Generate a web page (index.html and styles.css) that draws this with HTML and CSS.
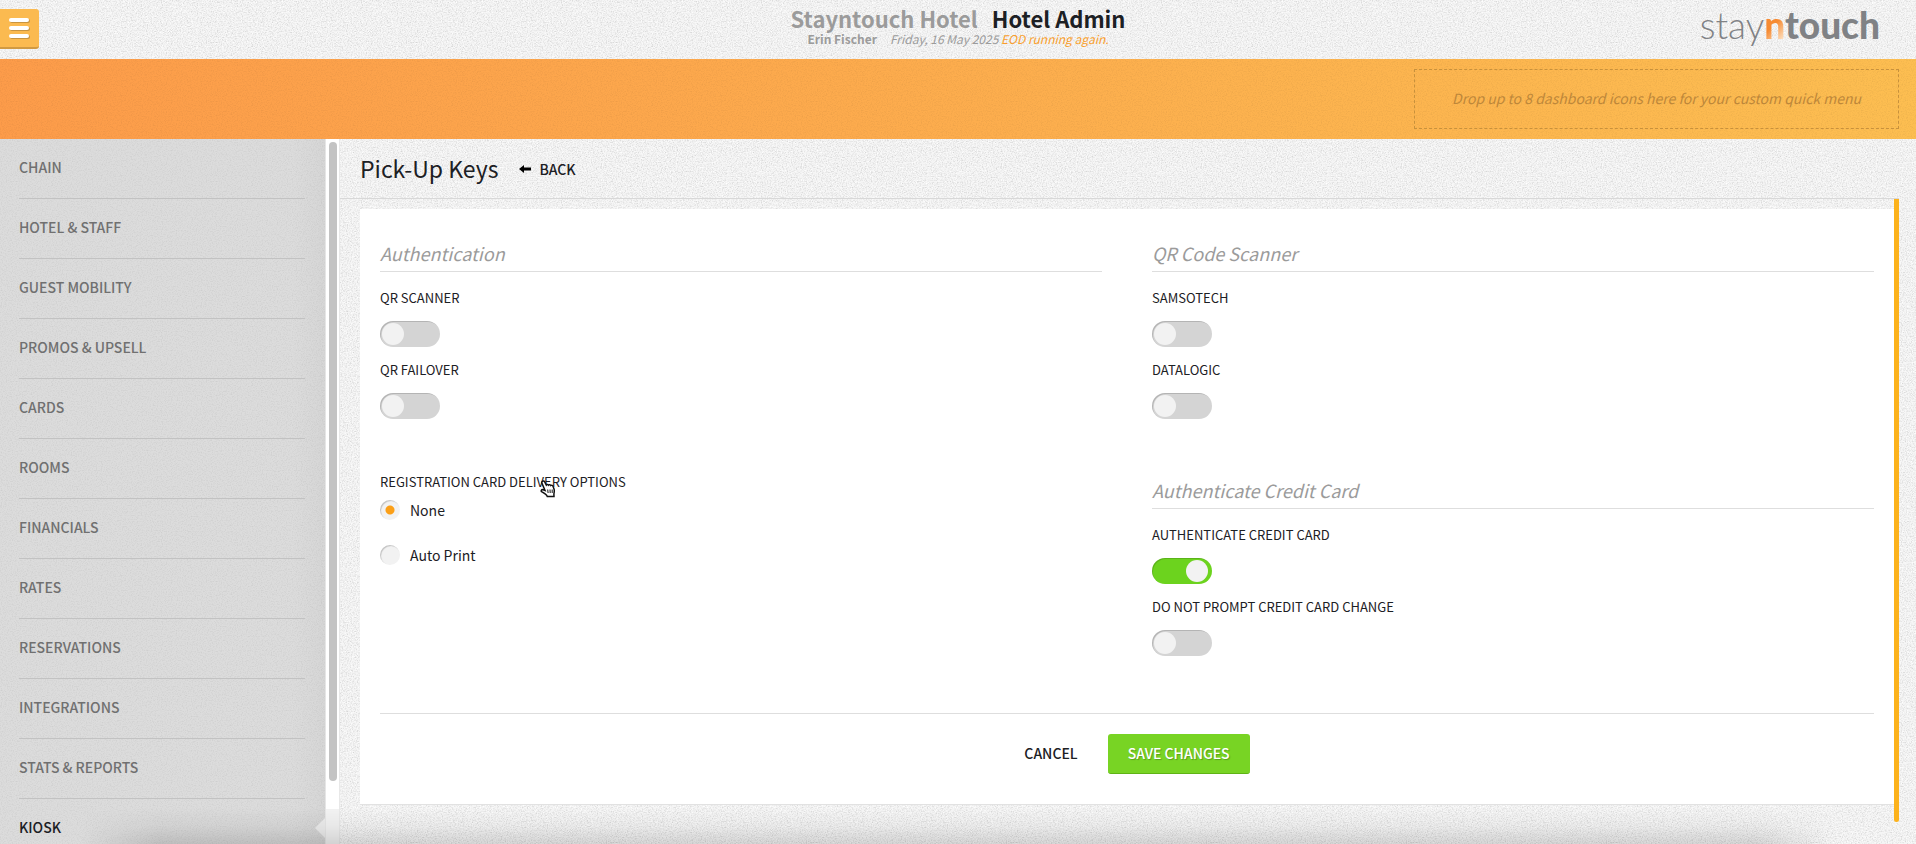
FILE: index.html
```html
<!DOCTYPE html>
<html lang="en">
<head>
<meta charset="utf-8">
<title>Hotel Admin - Pick-Up Keys</title>
<link rel="stylesheet" href="styles.css">
</head>
<body>
<header class="topbar">
  <button class="menu-btn" type="button" aria-label="Open menu"><span></span><span></span><span></span></button>
  <div class="titles">
    <h1 class="hotel"><span class="hotel-name">Stayntouch Hotel</span><span>Hotel Admin</span></h1>
    <p class="meta"><strong>Erin Fischer</strong><em>Friday, 16 May 2025 <span class="eod">EOD running again.</span></em></p>
  </div>
  <a class="logo" href="#"><span class="logo-light">stay</span><span class="logo-n">n</span>touch</a>
</header>
<section class="quick">
  <div class="drop">Drop up to 8 dashboard icons here for your custom quick menu</div>
</section>
<div class="body">
  <nav class="side">
    <a href="#">Chain</a>
    <a href="#">Hotel &amp; Staff</a>
    <a href="#">Guest Mobility</a>
    <a href="#">Promos &amp; Upsell</a>
    <a href="#">Cards</a>
    <a href="#">Rooms</a>
    <a href="#">Financials</a>
    <a href="#">Rates</a>
    <a href="#">Reservations</a>
    <a href="#">Integrations</a>
    <a href="#">Stats &amp; Reports</a>
    <a href="#" class="active" aria-current="page">Kiosk</a>
  </nav>
  <div class="track" aria-hidden="true"><div class="thumb"></div></div>
  <main class="main">
    <div class="page-head">
      <h2>Pick-Up Keys</h2>
      <a class="back" href="#"><svg width="12" height="8" viewBox="0 0 12 8" aria-hidden="true"><path d="M0 4 5 0V2.500H12V5.500H5V8Z"/></svg>Back</a>
    </div>
    <div class="scroll">
      <form class="card">
        <div class="cols">
          <div class="col">
            <fieldset>
              <legend>Authentication</legend>
              <div class="field"><label for="qr">QR Scanner</label><input class="switch" type="checkbox" id="qr"></div>
              <div class="field"><label for="fail">QR Failover</label><input class="switch" type="checkbox" id="fail"></div>
            </fieldset>
            <div class="radios" role="radiogroup" aria-labelledby="reg">
              <div class="reg" id="reg">Registration Card Delivery Options
                <svg class="cursor" width="17" height="18" viewBox="0 0 17 18" aria-hidden="true"><path d="M2.500 1.300c.8-.7 1.800-.3 2.200.5L6.300 5c.5-.8 1.700-.8 2.200.1.600-.7 1.900-.5 2.300.4.700-.5 1.900-.1 2.200.8l1 2.700c.8 2.300-.1 3.500-.1 5.200l.1 2.300H7.300c-.6-1.700-2.900-3.300-5.300-4.600-1.500-.9-.6-2.600 1.100-2.200l1.900.7L2 3.400c-.4-.8-.2-1.600.5-2.100Z" fill="#fff" stroke="#111" stroke-width="1.500"/><path d="M7.700 9.500l.4 3.500M10 9.500l.2 3.500M12.200 9.500v3.500" stroke="#111" fill="none"/></svg>
              </div>
              <label class="radio"><input type="radio" name="delivery" checked>None</label>
              <label class="radio"><input type="radio" name="delivery">Auto Print</label>
            </div>
          </div>
          <div class="col">
            <fieldset>
              <legend>QR Code Scanner</legend>
              <div class="field"><label for="sam">Samsotech</label><input class="switch" type="checkbox" id="sam"></div>
              <div class="field"><label for="data">Datalogic</label><input class="switch" type="checkbox" id="data"></div>
            </fieldset>
            <fieldset>
              <legend>Authenticate Credit Card</legend>
              <div class="field"><label for="acc">Authenticate Credit Card</label><input class="switch" type="checkbox" id="acc" checked></div>
              <div class="field"><label for="dnp">Do not prompt credit card change</label><input class="switch" type="checkbox" id="dnp"></div>
            </fieldset>
          </div>
        </div>
        <div class="actions">
          <button class="btn" type="button">Cancel</button>
          <button class="btn save" type="submit">Save Changes</button>
        </div>
      </form>
      <div class="bar" aria-hidden="true"></div>
    </div>
  </main>
</div>
</body>
</html>
```
FILE: styles.css
```css
* { box-sizing: border-box; }

:root {
  --grain: url("data:image/svg+xml,%3Csvg xmlns='http://www.w3.org/2000/svg' width='200' height='200'%3E%3Cfilter id='n' x='0' y='0' width='1' height='1' color-interpolation-filters='sRGB'%3E%3CfeTurbulence type='fractalNoise' baseFrequency='.8' numOctaves='2' stitchTiles='stitch'/%3E%3CfeColorMatrix values='0 0 0 0 0 0 0 0 0 0 0 0 0 0 0 .3 0 0 0 -.13'/%3E%3C/filter%3E%3Cfilter id='w' x='0' y='0' width='1' height='1' color-interpolation-filters='sRGB'%3E%3CfeTurbulence type='fractalNoise' seed='5' baseFrequency='.8' numOctaves='2' stitchTiles='stitch'/%3E%3CfeColorMatrix values='0 0 0 0 1 0 0 0 0 1 0 0 0 0 1 4 0 0 0 -2.300'/%3E%3C/filter%3E%3Crect width='200' height='200' filter='url(%23n)'/%3E%3Crect width='200' height='200' filter='url(%23w)'/%3E%3C/svg%3E");
  --grain-dark: url("data:image/svg+xml,%3Csvg xmlns='http://www.w3.org/2000/svg' width='200' height='200'%3E%3Cfilter id='n' x='0' y='0' width='1' height='1' color-interpolation-filters='sRGB'%3E%3CfeTurbulence type='fractalNoise' baseFrequency='.8' numOctaves='2' stitchTiles='stitch'/%3E%3CfeColorMatrix values='0 0 0 0 0 0 0 0 0 0 0 0 0 0 0 .14 0 0 0 -.06'/%3E%3C/filter%3E%3Crect width='200' height='200' filter='url(%23n)'/%3E%3C/svg%3E");
}

body {
  margin: 0;
  height: 100vh;
  display: flex;
  flex-direction: column;
  overflow: hidden;
  position: relative;
  background: var(--grain), #f5f5f5;
  color: #1c2024;
  font-family: "Noto Sans CJK SC", "Noto Sans", sans-serif;
  font-size: 14px;
  line-height: 20px;
}

/* soft shade rising from the bottom edge */
body::after {
  content: "";
  position: absolute;
  left: 80px;
  right: 80px;
  bottom: 0;
  height: 36px;
  background: linear-gradient(to top, rgba(0, 0, 0, .13), rgba(0, 0, 0, .04) 50%, transparent);
  mask-image: linear-gradient(90deg, transparent, #000 80px calc(100% - 80px), transparent);
  pointer-events: none;
}

h1, h2, p { margin: 0; }
a { color: inherit; text-decoration: none; }
button { font: inherit; border: 0; background: none; cursor: pointer; }

.topbar {
  height: 59px;
  flex: none;
  display: grid;
  grid-template-columns: 1fr auto 1fr;
  align-items: start;
}

.menu-btn {
  width: 39px;
  height: 40px;
  margin-top: 9px;
  padding: 0 0 0 9px;
  display: flex;
  flex-direction: column;
  justify-content: center;
  gap: 4px;
  background: #fbba50;
  border-bottom: 2px solid #d19a42;
  border-radius: 0 3px 3px 0;
}
.menu-btn span {
  width: 20px;
  height: 4px;
  border-radius: 2px;
  background: #fff;
  box-shadow: 1px 1px 0 rgba(0, 0, 0, .2);
}

.titles { padding-top: 4px; text-align: center; }
.hotel {
  display: flex;
  gap: 14px;
  font-size: 22px;
  line-height: 28px;
  font-weight: 700;
}
.hotel-name, .meta { color: #9b9b9b; }
.meta {
  display: flex;
  justify-content: center;
  gap: 13px;
  font-size: 12px;
  line-height: 14px;
}
.meta strong { font-weight: 700; }
.eod { color: #f99e2b; }

.logo {
  justify-self: end;
  margin-right: 36px;
  font: 900 37px/40px Lato, sans-serif;
  padding-top: 5px;
  color: #808285;
}
.logo-light { font-weight: 300; }
.logo-n {
  background: linear-gradient(135deg, #f68b33 50%, #fde0c0 85%);
  background-clip: text;
  color: transparent;
}

.quick {
  height: 80px;
  flex: none;
  padding: 10px 17px;
  display: flex;
  justify-content: flex-end;
  background: var(--grain-dark), linear-gradient(90deg, #fd9c4a, #fdbe51);
}
.drop {
  width: 485px;
  padding-bottom: 2px;
  display: flex;
  align-items: center;
  justify-content: center;
  border: 1px dashed #c8913c;
  color: #bd873a;
  font-style: italic;
}

.body { flex: 1; min-height: 0; display: flex; }

.side {
  width: 326px;
  flex: none;
  overflow: hidden;
  padding: 0 20px 0 19px;
  background: var(--grain-dark), linear-gradient(90deg, #dcdcdc 90%, #d6d6d6);
  border-right: 1px solid #e6e6e6;
}
.side a {
  display: block;
  height: 60px;
  padding-top: 18px;
  border-bottom: 1px solid #c2c2c2;
  color: #707070;
  font-weight: 500;
  text-transform: uppercase;
  position: relative;
}
.side .active { height: 45px; border: 0; color: #1c2024; }
.side .active::after {
  content: "";
  position: absolute;
  right: -20px;
  top: 19px;
  border: 10px solid transparent;
  border-left: 0;
  border-right-color: #ececec;
}

.track {
  width: 14px;
  flex: none;
  padding: 3px 2px 0 3px;
  background: linear-gradient(#fff 95%, #f2f2f2 95%);
  border-right: 1px solid #e8e8e8;
}
.thumb { width: 8px; height: 91%; border-radius: 4px; background: #c3c3c3; }

.main { flex: 1; min-width: 0; padding-right: 17px; }
.page-head {
  height: 60px;
  padding: 0 20px;
  display: flex;
  align-items: center;
  gap: 21px;
  border-bottom: 1px solid #d8d8d8;
}
.page-head h2 { padding-bottom: 2px; font-size: 23px; line-height: 32px; font-weight: 400; }
.back {
  display: flex;
  align-items: center;
  gap: 8px;
  font-weight: 500;
  text-transform: uppercase;
}

.scroll { display: flex; }
.card {
  flex: 1;
  margin: 10px 0 18px 20px;
  padding: 30px 20px 30px;
  background: #fff;
  border-bottom: 1px solid #e2e2e2;
}
.cols { display: grid; grid-template-columns: 1fr 1fr; gap: 50px; }
fieldset { margin: 0 0 40px; padding: 0; border: 0; height: 197px; }
legend {
  width: 100%;
  height: 33px;
  padding: 0;
  margin-bottom: 16px;
  border-bottom: 1px solid #dedede;
  color: #9b9b9b;
  font-size: 18px;
  line-height: 28px;
  font-style: italic;
}
.field { height: 72px; display: flex; flex-direction: column; gap: 13px; }
.field label, .reg { font-size: 13px; line-height: 20px; text-transform: uppercase; }

.switch {
  appearance: none;
  width: 60px;
  height: 26px;
  margin: 0;
  border-radius: 13px;
  background: #d4d4d4;
  box-shadow: inset 1px 1px 0 rgba(0, 0, 0, .15);
}
.switch::before {
  content: "";
  display: block;
  width: 22px;
  height: 22px;
  margin: 2px;
  border-radius: 50%;
  background: #f2f2f2;
}
.switch:checked { background: #6cd31e; }
.switch:checked::before { margin-left: 34px; }

.radios { display: grid; gap: 8px; margin-top: -4px; }
.reg { position: relative; justify-self: start; }
.cursor { position: absolute; left: 160px; top: 8px; }
.radio {
  display: flex;
  gap: 10px;
  height: 37px;
  align-items: start;
}
.radio input {
  appearance: none;
  width: 20px;
  height: 20px;
  margin: 0;
  border-radius: 50%;
  background: #f2f2f2;
  box-shadow: inset 1px 1px 1px rgba(0, 0, 0, .2);
}
.radio input:checked { background: radial-gradient(circle, #fb9f17 0 4px, #f2f2f2 5px); }

.actions {
  display: flex;
  justify-content: center;
  gap: 10px;
  padding-top: 20px;
  border-top: 1px solid #dedede;
}
.btn {
  height: 40px;
  padding: 0 20px 2px;
  border-radius: 3px;
  font-weight: 500;
  text-transform: uppercase;
  color: #1c2024;
}
.save {
  background: #78d424;
  border-bottom: 1px solid #5fb315;
  color: #fff;
  text-shadow: 1px 1px 1px rgba(0, 0, 0, .25);
}

.bar {
  width: 5px;
  flex: none;
  margin-bottom: 1px;
  background: #fcb21c;
  border-radius: 0 0 3px 3px;
}
```
